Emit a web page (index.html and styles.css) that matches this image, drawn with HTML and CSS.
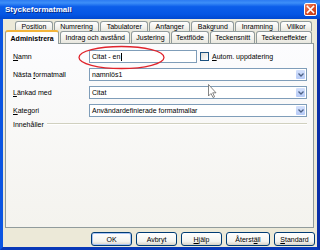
FILE: index.html
```html
<!doctype html>
<html lang="sv">

<head>
    <title>Styckeformatmall</title>
    <meta charset="UTF-8" />
    <link rel="stylesheet" href="styles.css">
</head>

<body>
    <div class="window">
        <div class="titlebar">
            <span class="title">Styckeformatmall</span>
            <span class="close">
                <svg width="9" height="9" viewBox="0 0 9 9"><path d="M1.5 1.5 L7.5 7.5 M7.5 1.5 L1.5 7.5" stroke="#fff" stroke-width="1.6" stroke-linecap="square" /></svg>
            </span>
        </div>

        <div class="frame">
            <div class="tabrow back">
                <span class="tab">Position</span>
                <span class="tab">Numrering</span>
                <span class="tab">Tabulatorer</span>
                <span class="tab">Anfanger</span>
                <span class="tab">Bakgrund</span>
                <span class="tab">Inramning</span>
                <span class="tab">Villkor</span>
            </div>
            <div class="tabrow front">
                <span class="tab active">Administrera</span>
                <span class="tab">Indrag och avstånd</span>
                <span class="tab">Justering</span>
                <span class="tab">Textflöde</span>
                <span class="tab">Teckensnitt</span>
                <span class="tab">Teckeneffekter</span>
            </div>

            <div class="panel">
                <div class="form">
                    <label><u>N</u>amn</label>
                    <div class="namerow">
                        <div class="field name">Citat - en<span class="caret"></span></div>
                        <span class="check"></span>
                        <span><u>A</u>utom. uppdatering</span>
                    </div>

                    <label>Nästa <u>f</u>ormatmall</label>
                    <div class="field">namnlös1<span class="arrow"><svg width="6" height="4" viewBox="0 0 6 4"><path d="M0.5 0.5 L3 3 L5.5 0.5" fill="none" stroke="#4D6185" stroke-width="1.3" /></svg></span></div>

                    <label><u>L</u>änkad med</label>
                    <div class="field">Citat<span class="arrow"><svg width="6" height="4" viewBox="0 0 6 4"><path d="M0.5 0.5 L3 3 L5.5 0.5" fill="none" stroke="#4D6185" stroke-width="1.3" /></svg></span></div>

                    <label><u>K</u>ategori</label>
                    <div class="field">Användardefinierade formatmallar<span class="arrow"><svg width="6" height="4" viewBox="0 0 6 4"><path d="M0.5 0.5 L3 3 L5.5 0.5" fill="none" stroke="#4D6185" stroke-width="1.3" /></svg></span></div>
                </div>

                <div class="group">
                    <span>Innehåller</span>
                    <span class="line"></span>
                </div>
            </div>

            <div class="buttons">
                <button class="default">OK</button>
                <button>Avbryt</button>
                <button><u>H</u>jälp</button>
                <button class="wide">Återst<u>ä</u>ll</button>
                <button><u>S</u>tandard</button>
            </div>
        </div>

        <!-- annotation and mouse pointer lie over the dialog -->
        <svg class="overlay" width="320" height="250" viewBox="0 0 320 250">
            <ellipse cx="121.5" cy="57.5" rx="42.5" ry="11" fill="none" stroke="#E0242C" stroke-width="1.3" />
            <path d="M208.5 84.5 L208.5 96 L211 93.5 L213 97.5 L214.6 96.8 L212.7 92.8 L216 92.8 Z" fill="#fff" stroke="#666" stroke-width="0.8" />
        </svg>
    </div>
</body>

</html>
```

FILE: styles.css
```css
body {
    margin: 0;
    font-family: "Liberation Sans", Arial, sans-serif;
    font-size: 7px;
    color: #000;
}

.window {
    width: 320px;
    height: 250px;
    display: flex;
    flex-direction: column;
    background: #ECE9D8;
    position: relative;
    overflow: hidden;
}

.titlebar {
    height: 19px;
    flex: none;
    display: flex;
    align-items: center;
    justify-content: space-between;
    padding: 0 3px 0 5px;
    background: linear-gradient(#2C7BF2 0%, #3D8FF8 15%, #0C5EEA 35%, #0556E4 75%, #0048D0 100%);
}

.title {
    color: #fff;
    font-weight: bold;
    font-size: 8px;
    text-shadow: 1px 1px 0 #0A2A86;
}

.close {
    width: 11px;
    height: 11px;
    border: 1px solid #fff;
    border-radius: 2px;
    background: linear-gradient(135deg, #EE8A6A, #DA4C25 50%, #C03A18);
    display: flex;
    align-items: center;
    justify-content: center;
}

.frame {
    flex: 1;
    display: flex;
    flex-direction: column;
    border: 3px solid #0B55E2;
    border-top: 0;
    border-right-color: #0A2FA8;
    border-bottom-color: #0838B8;
    padding-top: 2px;
}

.tabrow {
    display: flex;
    flex: none;
}

.tabrow.back {
    height: 10px;
    margin: 0 4px 0 12px;
}

.tabrow.front {
    height: 12px;
    margin: 0 4px 0 2px;
    align-items: flex-end;
}

.tab {
    flex: 1 1 auto;
    height: 100%;
    box-sizing: border-box;
    padding: 0 3px;
    margin-right: 1px;
    border: 1px solid #919B9C;
    border-bottom: 0;
    border-radius: 3px 3px 0 0;
    background: linear-gradient(#FFFFFF, #F2F1EC 60%, #E7E6DE);
    display: flex;
    align-items: center;
    justify-content: center;
    white-space: nowrap;
}

.tab.active {
    flex-grow: 1.4;
    height: 14px;
    margin-bottom: -1px;
    border-top: 2px solid #F3B43A;
    background: #FCFCFE;
    font-weight: bold;
    position: relative;
    z-index: 1;
}

.panel {
    height: 185px;
    flex: none;
    box-sizing: border-box;
    margin: 0 3px 0 2px;
    padding: 6px 6px 0 7px;
    border: 1px solid #919B9C;
    background: linear-gradient(#FCFCFE, #F4F3EE);
}

.form {
    display: grid;
    grid-template-columns: 76px 1fr;
    grid-auto-rows: 13px;
    row-gap: 5px;
    align-items: center;
}

.namerow {
    display: flex;
    align-items: center;
    height: 13px;
}

.field {
    height: 13px;
    box-sizing: border-box;
    border: 1px solid #7F9DB9;
    background: #fff;
    display: flex;
    align-items: center;
    padding-left: 2px;
    white-space: nowrap;
}

.field.name {
    width: 108px;
    margin-right: 3px;
}

.caret {
    width: 1px;
    height: 8px;
    margin-left: 1px;
    background: #000;
}

.check {
    width: 7px;
    height: 7px;
    border: 1px solid #1C5180;
    background: linear-gradient(135deg, #DCDCD7, #fff);
    margin-right: 3px;
}

.arrow {
    margin-left: auto;
    width: 9px;
    height: 9px;
    margin-right: 1px;
    border-radius: 1px;
    background: linear-gradient(#D4E1FC, #B6CAF7);
    display: flex;
    align-items: center;
    justify-content: center;
}

.group {
    display: flex;
    align-items: center;
    gap: 3px;
    height: 8px;
    margin-top: 3px;
}

.line {
    flex: 1;
    border-top: 1px solid #D0D0BF;
    border-bottom: 1px solid #fff;
}

.buttons {
    display: flex;
    justify-content: flex-end;
    gap: 4px;
    margin: 4px 2px 0 0;
}

button {
    width: 41px;
    height: 14px;
    padding: 0;
    border: 1px solid #003C74;
    border-radius: 3px;
    background: linear-gradient(#FFFFFF, #F3F3EF 70%, #D8D2C6);
    font-family: "Liberation Sans", Arial, sans-serif;
    font-size: 7px;
    color: #000;
}

button.wide {
    width: 44px;
}

button.default {
    box-shadow: inset 0 0 0 1px #A9C4F5;
}

.overlay {
    position: absolute;
    left: 0;
    top: 0;
    pointer-events: none;
}
```
